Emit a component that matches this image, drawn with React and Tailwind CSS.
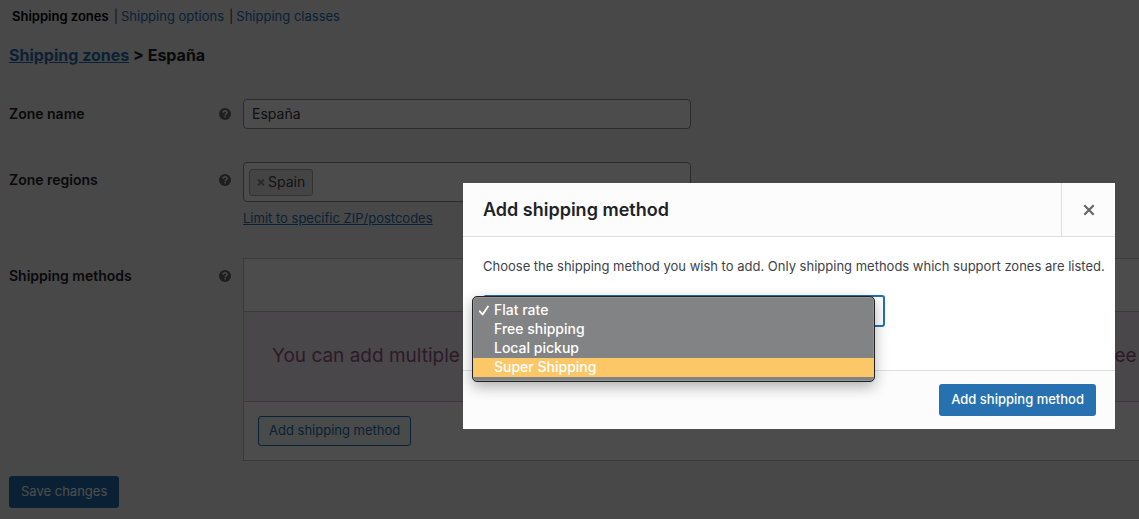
import { useState } from 'react';

const methods = ['Flat rate', 'Free shipping', 'Local pickup', 'Super Shipping'];

function HelpTip({ label }) {
  return (
    <svg viewBox="0 0 12 12" className="h-3 w-3 shrink-0" role="img" aria-label={label}>
      <circle cx="6" cy="6" r="6" fill="#666" />
      <path
        d="M4 4.7C4 3.5 4.8 2.8 6 2.8s2 .7 2 1.7c0 1.3-1.8 1.3-1.8 2.6"
        fill="none"
        stroke="#f0f0f1"
        strokeWidth="1.6"
      />
      <rect x="5.3" y="7.8" width="1.7" height="1.6" fill="#f0f0f1" />
    </svg>
  );
}

function FormRow({ label, htmlFor, help, className, labelClass = 'h-[30px]', children }) {
  return (
    <div className={`flex ${className}`}>
      <div
        className={`flex w-[222px] shrink-0 items-center justify-between text-sm font-semibold text-[#1d2327] ${labelClass}`}
      >
        <label htmlFor={htmlFor}>{label}</label>
        <HelpTip label={help} />
      </div>
      <div className="ml-3 min-w-0 flex-1">{children}</div>
    </div>
  );
}

function MethodsTable({ onAdd }) {
  return (
    <table className="w-[920px] border-collapse border border-[#c3c4c7] bg-white">
      <thead>
        <tr>
          <th className="h-[53px]" aria-label="Methods"></th>
        </tr>
      </thead>
      <tbody>
        <tr>
          <td className="h-[90px] border-t border-b border-t-[#c3c4c7] border-b-[#d3b9cb] bg-[#f5eff3] px-7 text-[19px] whitespace-nowrap text-[#96588a]">
            You can add multiple shipping methods within this zone. Only customers within the zone will see
          </td>
        </tr>
      </tbody>
      <tfoot>
        <tr>
          <td className="h-[59px] px-3.5">
            <button
              type="button"
              onClick={onAdd}
              className="block h-[30px] rounded-[3px] border border-[#2271b1] bg-[#f6f7f7] px-2.5 text-[13px] text-[#2271b1]"
            >
              Add shipping method
            </button>
          </td>
        </tr>
      </tfoot>
    </table>
  );
}

function MethodSelect({ value, onChange }) {
  const [active, setActive] = useState('Super Shipping');

  return (
    <div className="relative w-[402px] max-w-full">
      <select
        aria-label="Shipping method"
        value={value}
        onChange={(e) => onChange(e.target.value)}
        className="block h-8 w-full appearance-none rounded-[3px] border-2 border-[#2271b1] bg-white px-2 text-sm text-[#2c3338] outline-none"
      >
        {methods.map((method) => (
          <option key={method}>{method}</option>
        ))}
      </select>
      <ul
        role="listbox"
        aria-label="Shipping methods"
        className="absolute top-px right-2.5 -left-[11px] rounded-[5px] border border-[#222] bg-[#828384] pt-1 pb-1 text-sm font-medium text-white shadow-[inset_0_0_0_1px_rgba(255,255,255,0.15),0_5px_14px_rgba(0,0,0,0.3)]"
      >
        {methods.map((method) => (
          <li
            key={method}
            role="option"
            aria-selected={method === value}
            onMouseEnter={() => setActive(method)}
            onClick={() => onChange(method)}
            className={`flex h-[19px] items-center pb-0.5 ${method === active ? 'bg-[#fcc767]' : ''}`}
          >
            <span className="flex w-[21px] justify-center">
              {method === value && (
                <svg viewBox="0 0 12 12" className="h-3 w-3" aria-hidden="true">
                  <path
                    d="M1.8 7.3 4.6 10.5 10 2.5"
                    fill="none"
                    stroke="#fff"
                    strokeWidth="1.8"
                    strokeLinecap="round"
                    strokeLinejoin="round"
                  />
                </svg>
              )}
            </span>
            {method}
          </li>
        ))}
      </ul>
    </div>
  );
}

function AddMethodModal({ onClose }) {
  const [value, setValue] = useState('Flat rate');

  return (
    <div className="fixed inset-0 flex items-start justify-end bg-black/70 pt-[183px] pr-6">
      <section role="dialog" aria-labelledby="modal-title" className="w-[652px] max-w-full bg-white">
        <header className="flex h-[54px] items-center justify-between border-b border-[#ddd] bg-[#fcfcfc] pl-5">
          <h1 id="modal-title" className="text-lg font-semibold text-[#1d2327]">
            Add shipping method
          </h1>
          <button
            type="button"
            aria-label="Close modal panel"
            onClick={onClose}
            className="flex h-full w-[54px] items-center justify-center border-l border-[#ddd]"
          >
            <svg viewBox="0 0 12 12" className="h-3 w-3" aria-hidden="true">
              <path d="M1.3 1.3l9.4 9.4M10.7 1.3l-9.4 9.4" stroke="#666" strokeWidth="2.2" />
            </svg>
          </button>
        </header>
        <div className="px-5 pt-[19px] pb-[43px] text-[13px] text-[#3c434a]">
          <p className="mb-[19px] leading-5 whitespace-nowrap">
            Choose the shipping method you wish to add. Only shipping methods which support zones are listed.
          </p>
          <MethodSelect value={value} onChange={setValue} />
        </div>
        <footer className="flex justify-end border-t border-[#ddd] bg-[#fcfcfc] px-[19px] py-[13px]">
          <button type="button" className="h-8 rounded-[3px] bg-[#2771b1] px-3 text-[13px] font-medium text-white">
            Add shipping method
          </button>
        </footer>
      </section>
    </div>
  );
}

export default function App() {
  const [open, setOpen] = useState(true);
  const [name, setName] = useState('España');

  return (
    <div className="min-h-screen overflow-hidden bg-[#f0f0f1] pl-[9px] font-['Inter','Liberation_Sans',sans-serif] text-[13px] text-[#3c434a]">
      <nav className="flex pt-1.5 pl-[3px] leading-5">
        <a href="#zones" className="font-semibold text-black">Shipping zones</a>
        <span className="mr-[3px] ml-[5px]">|</span>
        <a href="#options" className="text-[#2271b1]">Shipping options</a>
        <span className="mr-[3px] ml-[5px]">|</span>
        <a href="#classes" className="text-[#2271b1]">Shipping classes</a>
      </nav>

      <h2 className="mt-[17px] text-base leading-6 font-bold text-[#1d2327]">
        <a href="#zones" className="text-[#2271b1] underline">Shipping zones</a> &gt; España
      </h2>

      <form onSubmit={(e) => e.preventDefault()}>
        <FormRow label="Zone name" htmlFor="zone-name" help="Zone name help" className="mt-8">
          <input
            id="zone-name"
            value={name}
            onChange={(e) => setName(e.target.value)}
            className="block h-[30px] w-[448px] max-w-full rounded-[4px] border border-[#8c8f94] bg-white px-2 pb-0.5 text-sm text-[#2c3338]"
          />
        </FormRow>

        <FormRow label="Zone regions" htmlFor="zone-region" help="Zone regions help" className="mt-9">
          <div className="-mt-[3px] flex h-10 w-[448px] max-w-full items-center rounded-[4px] border border-[#8c8f94] bg-white px-[5px]">
            <span className="flex h-[27px] items-center rounded-[3px] border border-[#aaa] bg-[#e4e4e4] px-[7px] text-sm text-[#3c434a]">
              <button type="button" aria-label="Remove Spain" className="mr-[3px]">
                <svg viewBox="0 0 8 8" className="h-2 w-2" aria-hidden="true">
                  <path d="M1 1.5l6 6M7 1.5L1 7.5" stroke="#888" strokeWidth="1.8" />
                </svg>
              </button>
              Spain
            </span>
            <input id="zone-region" className="min-w-0 flex-1 outline-none" />
          </div>
          <a href="#postcodes" className="mt-1.5 block w-fit leading-5 text-[#2271b1] underline">
            Limit to specific ZIP/postcodes
          </a>
        </FormRow>

        <FormRow
          label="Shipping methods"
          help="Shipping methods help"
          className="mt-[30px]"
          labelClass="h-9"
        >
          <MethodsTable onAdd={() => setOpen(true)} />
        </FormRow>

        <button
          type="submit"
          className="mt-[15px] h-8 rounded-[3px] bg-[#2271b1] px-3 text-[13px] text-white"
        >
          Save changes
        </button>
      </form>

      {open && <AddMethodModal onClose={() => setOpen(false)} />}
    </div>
  );
}
